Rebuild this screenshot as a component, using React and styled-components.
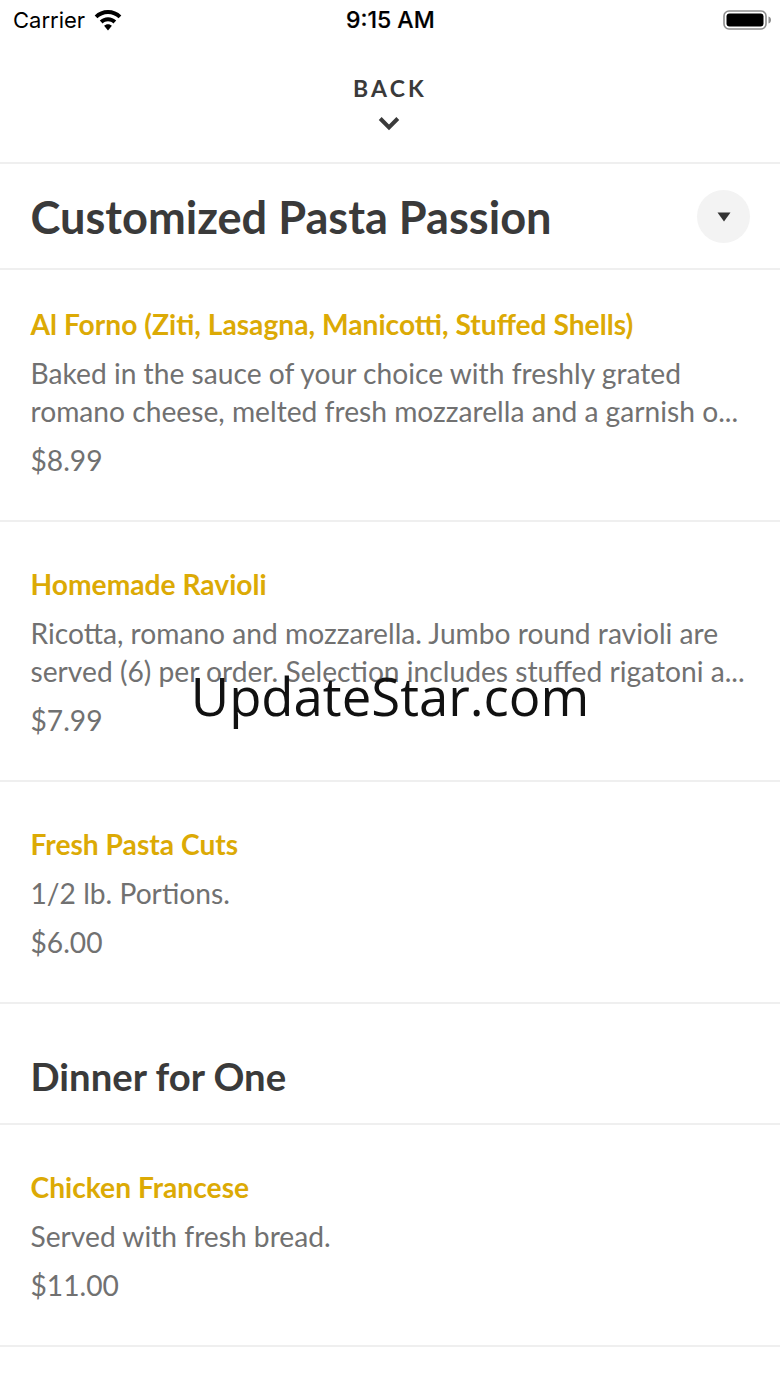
import React from "react";
import styled, { createGlobalStyle } from "styled-components";

const Global = createGlobalStyle`
  html, body { margin: 0; padding: 0; background: #fff; }
  body { font-family: "Lato", "Liberation Sans", sans-serif; }
`;

const Page = styled.div`
  position: relative;
  width: 780px;
  height: 1387px;
  overflow: hidden;
  background: #fff;
`;

const StatusBar = styled.div`
  height: 40px;
  padding: 0 7px 0 13px;
  display: grid;
  grid-template-columns: 333px auto 1fr;
  align-items: center;
  font-family: "Inter", "Liberation Sans", sans-serif;
  color: #000;
`;

const StatusLeft = styled.div`
  display: flex;
  align-items: center;
  gap: 9px;
  font-size: 22px;
`;

const StatusTime = styled.div`
  font-size: 23px;
  line-height: 38px;
  font-weight: 500;
  -webkit-text-stroke: 0.2px #000;
`;

const StatusRight = styled.div`
  display: flex;
  justify-content: flex-end;
`;

const BackBar = styled.div`
  height: 124px;
  box-sizing: border-box;
  border-bottom: 2px solid #efefef;
  display: flex;
  flex-direction: column;
  align-items: center;
  padding-top: 34px;
`;

const BackLabel = styled.div`
  font-size: 23px;
  line-height: 28px;
  font-weight: 700;
  letter-spacing: 3.2px;
  color: #3a3a3a;
`;

const BackIcon = styled.svg`
  display: block;
  margin-top: 14px;
  margin-right: 2px;
`;

const TitleRow = styled.div`
  height: 106px;
  box-sizing: border-box;
  border-bottom: 2px solid #efefef;
  padding: 2px 30px 0 30.5px;
  display: flex;
  align-items: center;
  justify-content: space-between;
`;

const Title = styled.h1`
  margin: 0;
  font-size: 45.15px;
  line-height: 56px;
  font-weight: 700;
  color: #3a3a3a;
`;

const ToggleButton = styled.div`
  width: 53px;
  height: 53px;
  margin-bottom: 2px;
  border-radius: 50%;
  background: #f3f3f3;
  display: flex;
  align-items: center;
  justify-content: center;
`;

const ToggleIcon = styled.svg`
  display: block;
  margin-top: 2px;
`;

const Item = styled.div`
  height: ${(p) => p.$h}px;
  box-sizing: border-box;
  border-bottom: 2px solid #efefef;
  padding: ${(p) => p.$top}px 30px 0 30.5px;
`;

const ItemName = styled.div`
  font-size: 28.2px;
  line-height: 40px;
  font-weight: 700;
  color: #dcaa05;
  white-space: nowrap;
`;

const ItemDesc = styled.div`
  margin-top: 10px;
  font-size: 28.2px;
  line-height: 38px;
  color: #717171;
  white-space: nowrap;
`;

const ItemPrice = styled.div`
  margin-top: 10px;
  font-size: 28.2px;
  line-height: 40px;
  color: #717171;
`;

const SectionRow = styled.div`
  height: 121px;
  box-sizing: border-box;
  border-bottom: 2px solid #efefef;
  padding: 24px 0 0 30.5px;
  display: flex;
  align-items: center;
`;

const SectionTitle = styled.h2`
  margin: 0;
  font-size: 38.3px;
  line-height: 48px;
  font-weight: 700;
  color: #3a3a3a;
`;

const Watermark = styled.div`
  position: absolute;
  left: 0;
  right: 0;
  top: 658px;
  text-align: center;
  font-family: "Open Sans", "Liberation Sans", sans-serif;
  font-size: 52.7px;
  line-height: 75px;
  color: #111;
`;

const Wifi = () => (
  <svg width="28" height="21" viewBox="0 0 28 21">
    <path fill="#000" d="M14 0C8.9 0 4.2 2 .7 5.4l2.7 2.9C6.2 5.6 9.9 4 14 4s7.8 1.6 10.6 4.3l2.7-2.9C23.8 2 19.1 0 14 0z" />
    <path fill="#000" d="M14 7.2c-3.2 0-6.1 1.3-8.2 3.3l2.8 2.9c1.4-1.4 3.3-2.2 5.4-2.2s4 .8 5.4 2.2l2.8-2.9c-2.1-2-5-3.3-8.2-3.3z" />
    <path fill="#000" d="M14 14.2c-1.5 0-2.9.6-3.9 1.6L14 20.4l3.9-4.6c-1-1-2.4-1.6-3.9-1.6z" />
  </svg>
);

const Battery = () => (
  <svg width="50" height="20" viewBox="0 0 50 20">
    <rect x="1" y="1" width="42" height="18" rx="5" fill="none" stroke="#8e8e8e" strokeWidth="1.6" />
    <rect x="3.5" y="3.5" width="37" height="13" rx="3" fill="#000" />
    <path d="M45.5 6.5c1.6.5 2.5 1.9 2.5 3.5s-.9 3-2.5 3.5z" fill="#8e8e8e" />
  </svg>
);

const items1 = [
  {
    h: 252,
    top: 34,
    name: "Al Forno (Ziti, Lasagna, Manicotti, Stuffed Shells)",
    desc: ["Baked in the sauce of your choice with freshly grated", "romano cheese, melted fresh mozzarella and a garnish o..."],
    price: "$8.99",
  },
  {
    h: 260,
    top: 42,
    name: "Homemade Ravioli",
    desc: ["Ricotta, romano and mozzarella. Jumbo round ravioli are", "served (6) per order. Selection includes stuffed rigatoni a..."],
    price: "$7.99",
  },
  { h: 222, top: 42, name: "Fresh Pasta Cuts", desc: ["1/2 lb. Portions."], price: "$6.00" },
];

const MenuItem = ({ h, top, name, desc, price }) => (
  <Item $h={h} $top={top}>
    <ItemName>{name}</ItemName>
    <ItemDesc>
      {desc.map((line) => (
        <div key={line}>{line}</div>
      ))}
    </ItemDesc>
    <ItemPrice>{price}</ItemPrice>
  </Item>
);

export default function App() {
  return (
    <Page>
      <Global />
      <StatusBar>
        <StatusLeft>
          <span>Carrier</span>
          <Wifi />
        </StatusLeft>
        <StatusTime>9:15 AM</StatusTime>
        <StatusRight>
          <Battery />
        </StatusRight>
      </StatusBar>
      <BackBar>
        <BackLabel>BACK</BackLabel>
        <BackIcon width="22" height="15" viewBox="0 0 22 15">
          <path d="M2.2 2.5 11 11.5l8.8-9" fill="none" stroke="#3a3a3a" strokeWidth="4" />
        </BackIcon>
      </BackBar>
      <TitleRow>
        <Title>Customized Pasta Passion</Title>
        <ToggleButton>
          <ToggleIcon width="14" height="10" viewBox="0 0 14 10">
            <path d="M0.5 0.5h13L7 9.5z" fill="#333" />
          </ToggleIcon>
        </ToggleButton>
      </TitleRow>
      {items1.map((it) => (
        <MenuItem key={it.name} {...it} />
      ))}
      <SectionRow>
        <SectionTitle>Dinner for One</SectionTitle>
      </SectionRow>
      <MenuItem h={222} top={42} name="Chicken Francese" desc={["Served with fresh bread."]} price="$11.00" />
      <Watermark>UpdateStar.com</Watermark>
    </Page>
  );
}
